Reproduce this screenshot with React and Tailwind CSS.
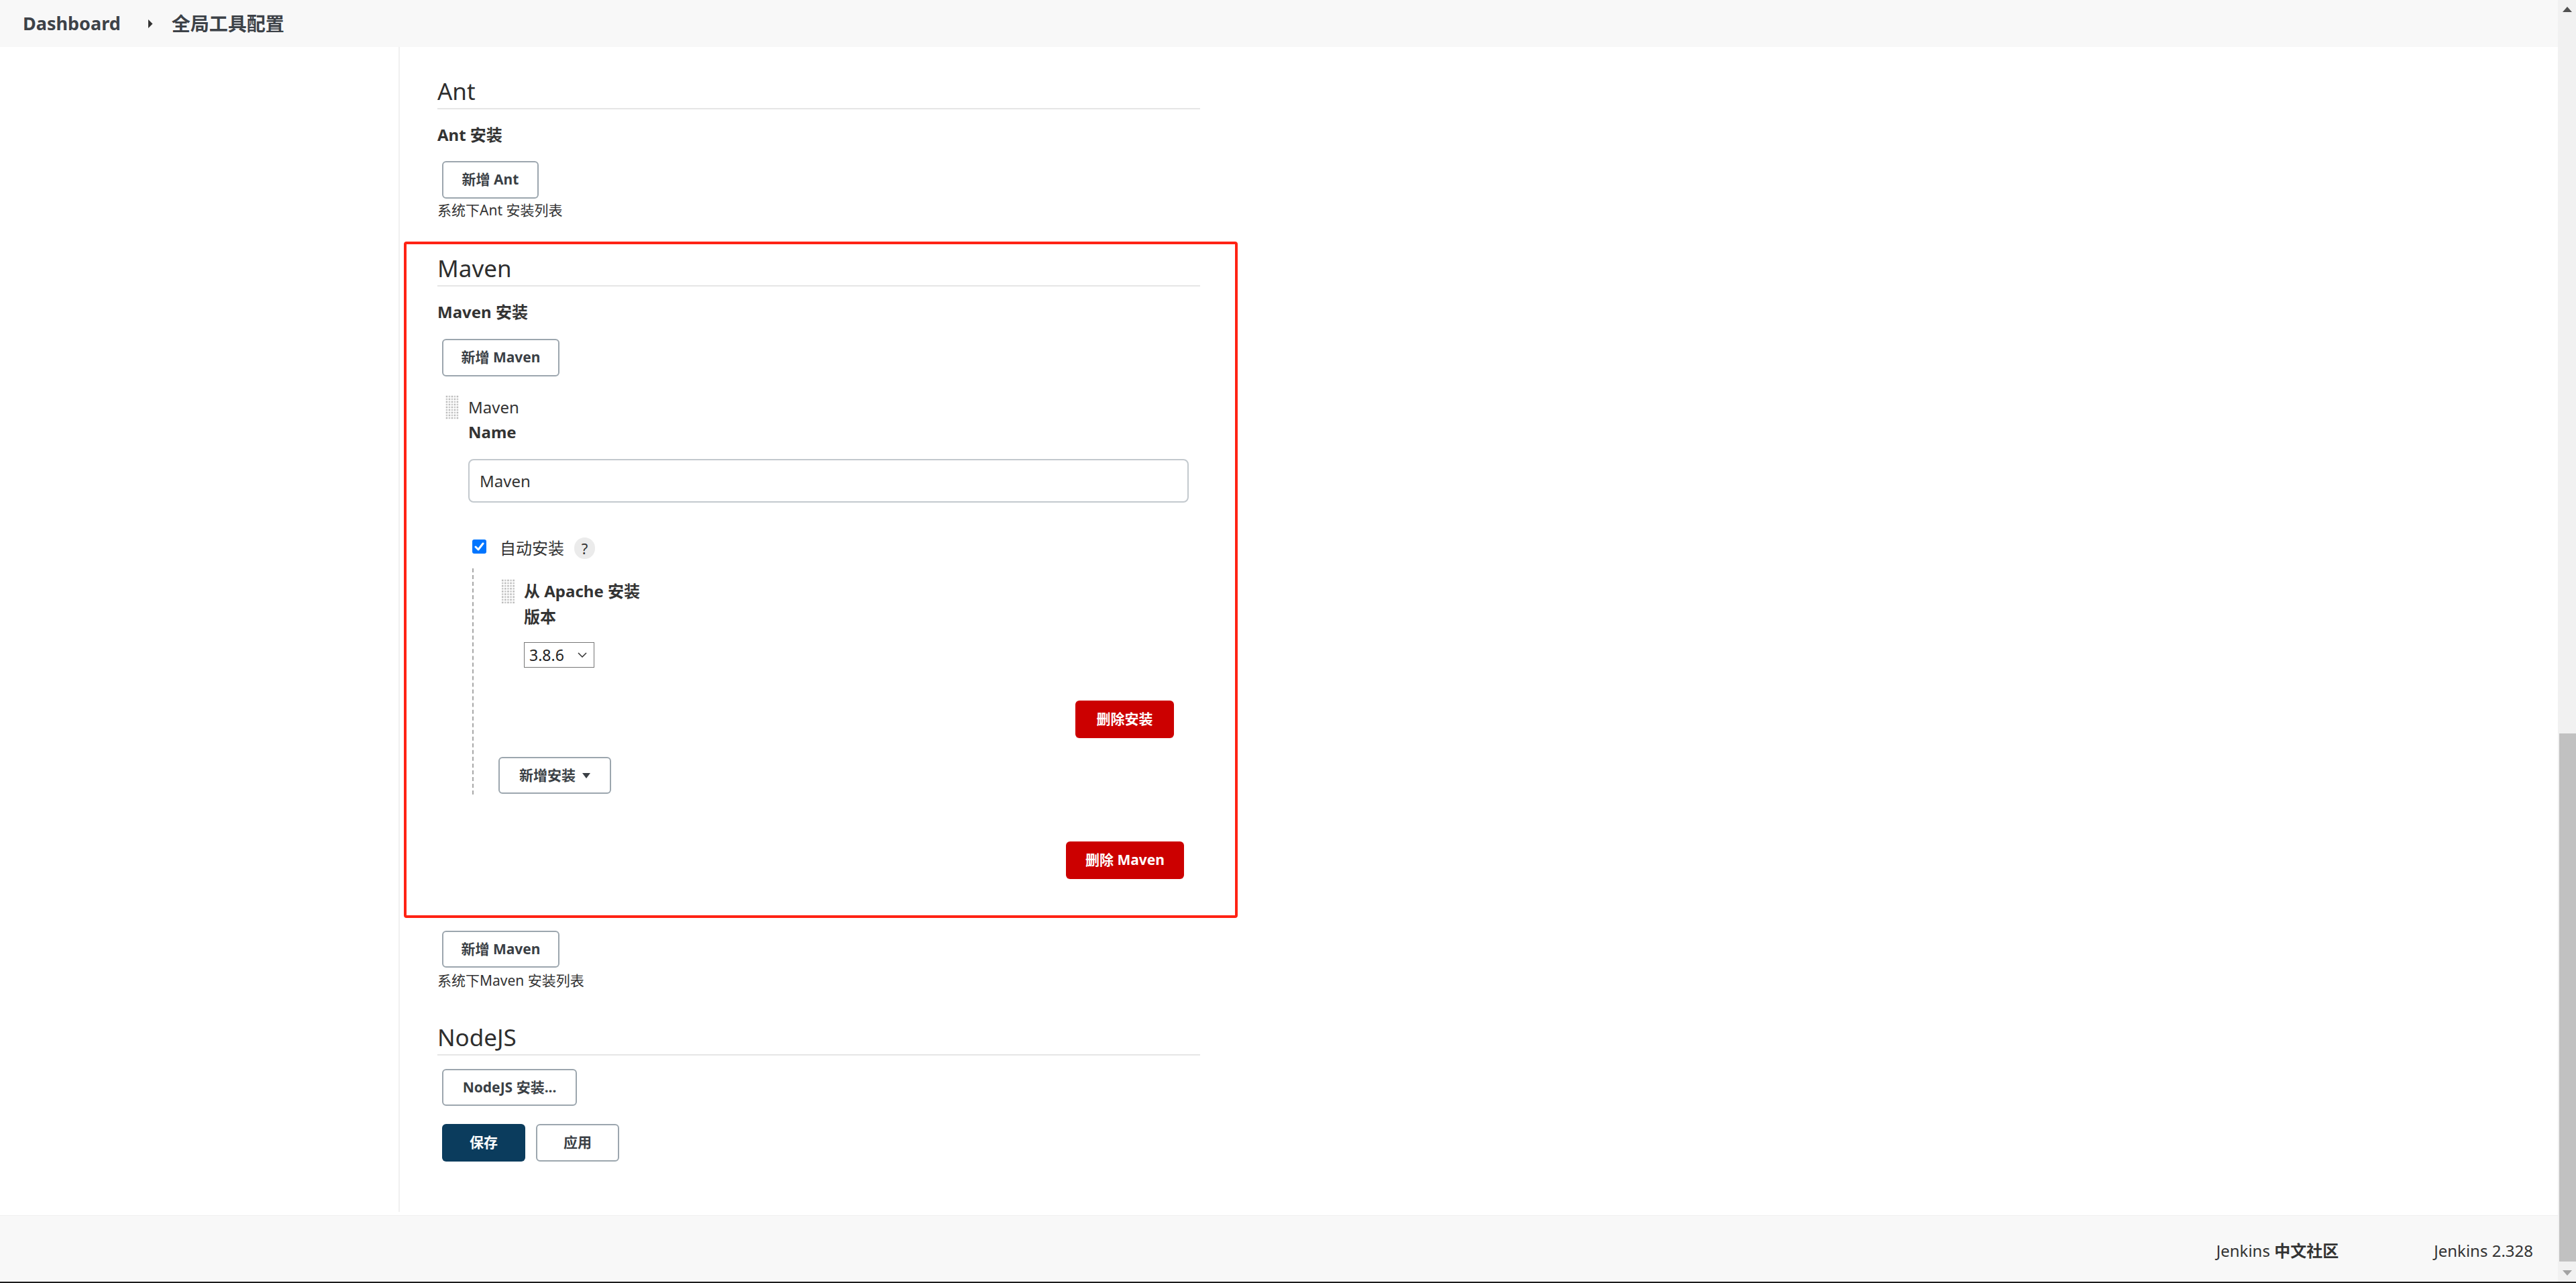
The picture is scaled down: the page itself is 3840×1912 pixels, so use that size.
import React from "react";

const Handle = ({ big }) => {
  const rows = 9;
  const cols = 5;
  const cells = [];
  for (let r = 0; r < rows; r++) {
    for (let c = 0; c < cols; c++) {
      cells.push(
        <rect key={r + "-" + c} x={c * 4 + 0.7} y={r * 4 + 0.7} width="2.5" height="2.5" fill={(r + c) % 2 === 0 ? "#bdbdbd" : "#cbcbcb"} />
      );
    }
  }
  return (
    <svg width={big ? 21 : 20} height={big ? 37 : 36} viewBox="0 0 20 36" className="shrink-0">
      {cells}
    </svg>
  );
};

const Btn = ({ className = "", children }) => (
  <div
    className={
      "flex items-center justify-center rounded-[6px] border-2 border-[#9ca6ae] bg-white text-[21px] font-bold text-[#3a3f45] " +
      className
    }
  >
    {children}
  </div>
);

const DangerBtn = ({ className = "", children }) => (
  <div
    className={
      "flex items-center justify-center rounded-[6px] bg-[#cc0000] text-[21px] font-bold text-white " + className
    }
  >
    {children}
  </div>
);

const Heading = ({ className = "", children }) => (
  <div className={"text-[35px] leading-[48px] pt-[2px] pb-[1px] border-b-2 border-[#e6e6e6] text-[#2e2e2e] " + className}>
    {children}
  </div>
);

export default function App() {
  return (
    <div className="w-[3840px] h-[1912px] flex flex-col overflow-hidden bg-white font-['Noto_Sans','Noto_Sans_CJK_SC',sans-serif] text-[#333]">
      <div className="flex flex-1 min-h-0">
        {/* page */}
        <div className="flex-1 flex flex-col min-w-0">
          {/* header / breadcrumbs */}
          <div className="h-[70px] shrink-0 bg-[#f8f8f8] flex items-center pl-[34px] font-bold text-[#3d4248]">
            <span className="text-[27px]">Dashboard</span>
            <svg width="7" height="13" viewBox="0 0 7 13" className="ml-[41px]">
              <polygon points="0,0 6.5,6.5 0,13" fill="#333" />
            </svg>
            <span className="ml-[28px] text-[28px]">全局工具配置</span>
          </div>

          {/* main */}
          <div className="relative flex-1 flex min-h-0">
            <div className="w-[594px] shrink-0" />
            <div className="w-[1195px] shrink-0 border-l-2 border-[#f0f0f0] pl-[56px] mb-[5px] flex flex-col">
              {/* Ant */}
              <Heading className="mt-[40px]">Ant</Heading>
              <div className="mt-[22px] text-[24px] leading-[32px] font-bold">Ant 安装</div>
              <Btn className="mt-[23px] ml-[7px] w-[144px] h-[56px] self-start">新增 Ant</Btn>
              <div className="mt-[4px] text-[21px] leading-[26px]">系统下Ant 安装列表</div>

              {/* Maven */}
              <Heading className="mt-[48px]">Maven</Heading>
              <div className="mt-[22px] text-[24px] leading-[32px] font-bold">Maven 安装</div>
              <Btn className="mt-[24px] ml-[7px] w-[175px] h-[56px] self-start">新增 Maven</Btn>

              <div className="mt-[28px] ml-[12px] mr-[17px] flex gap-[14px]">
                <Handle />
                <div className="flex-1 flex flex-col">
                  <div className="mt-[2px] text-[24px] leading-[32px]">Maven</div>
                  <div className="mt-[5px] text-[24px] leading-[32px] font-bold">Name</div>
                  <div className="mt-[24px] h-[65px] border-2 border-[#c3c9ce] rounded-[8px] px-[15px] flex items-center text-[24px]">
                    Maven
                  </div>

                  <div className="mt-[52px] h-[32px] flex items-center">
                    <div className="ml-[6px] mb-[5px] w-[21px] h-[21px] rounded-[3px] bg-[#0075ff] flex items-center justify-center">
                      <svg width="15" height="13" viewBox="0 0 15 13">
                        <path d="M2 7 L6 11 L13 2" fill="none" stroke="#fff" strokeWidth="3" strokeLinecap="round" strokeLinejoin="round" />
                      </svg>
                    </div>
                    <span className="ml-[20px] text-[24px] leading-[32px]">自动安装</span>
                    <div className="ml-[15px] w-[31px] h-[32px] rounded-full bg-[#ebebeb] flex items-center justify-center text-[22px] text-[#333]">
                      ?
                    </div>
                  </div>

                  <div className="mt-[14px] ml-[6px] border-l-2 border-dashed border-[#a8a8a8] flex flex-col pt-[16px] pb-[1px]">
                    <div className="ml-[41px] mr-[22px] flex gap-[13px]">
                      <Handle big />
                      <div className="flex-1 flex flex-col">
                        <div className="mt-[2px] text-[24px] leading-[32px] font-bold">从 Apache 安装</div>
                        <div className="mt-[6px] text-[24px] leading-[32px] font-bold">版本</div>
                        <div className="mt-[22px] w-[105px] h-[38px] border border-[#767676] flex items-center pl-[7px] text-[23px] text-[#222]">
                          <span>3.8.6</span>
                          <svg width="14" height="8" viewBox="0 0 14 8" className="ml-auto mr-[10px]">
                            <path d="M1 1 L7 7 L13 1" fill="none" stroke="#333" strokeWidth="1.5" />
                          </svg>
                        </div>
                        <DangerBtn className="mt-[49px] self-end w-[147px] h-[56px]">删除安装</DangerBtn>
                      </div>
                    </div>
                    <Btn className="mt-[28px] ml-[37px] w-[168px] h-[55px] self-start gap-[10px]">
                      <span>新增安装</span>
                      <svg width="12" height="8" viewBox="0 0 12 8">
                        <polygon points="0,0 12,0 6,8" fill="#3a3f45" />
                      </svg>
                    </Btn>
                  </div>

                  <DangerBtn className="mt-[70px] mr-[7px] self-end w-[176px] h-[56px]">删除 Maven</DangerBtn>
                </div>
              </div>

              <Btn className="mt-[77px] ml-[7px] w-[175px] h-[55px] self-start">新增 Maven</Btn>
              <div className="mt-[6px] text-[21px] leading-[26px]">系统下Maven 安装列表</div>

              {/* NodeJS */}
              <Heading className="mt-[46px]">NodeJS</Heading>
              <Btn className="mt-[20px] ml-[7px] w-[201px] h-[55px] self-start">NodeJS 安装...</Btn>

              <div className="mt-[27px] ml-[7px] flex gap-[16px]">
                <div className="w-[124px] h-[56px] rounded-[6px] bg-[#0b3c5d] text-white text-[21px] font-bold flex items-center justify-center">
                  保存
                </div>
                <Btn className="w-[124px] h-[56px]">应用</Btn>
              </div>
            </div>

            {/* annotation box */}
            <div className="absolute left-[602px] top-[290px] w-[1243px] h-[1008px] border-4 border-[#ff2314] rounded-[4px] pointer-events-none" />
          </div>

          {/* footer */}
          <div className="h-[99px] shrink-0 bg-[#f8f8f8] border-t border-[#efefef] flex items-center justify-end pr-[37px] pt-[6px] text-[24px] text-[#333]">
            <span className="mr-[142px]">
              Jenkins <span className="font-bold">中文社区</span>
            </span>
            <span>Jenkins 2.328</span>
          </div>
        </div>

        {/* scrollbar */}
        <div className="w-[27px] shrink-0 bg-[#f1f1f1] flex flex-col">
          <div className="h-[27px] flex items-center justify-center">
            <svg width="14" height="8" viewBox="0 0 14 8">
              <polygon points="0,8 14,8 7,0" fill="#505050" />
            </svg>
          </div>
          <div className="flex-1 flex flex-col justify-end pl-[2px] pb-[3px]">
            <div className="h-[787px] bg-[#c1c1c1]" />
          </div>
          <div className="h-[27px] flex items-center justify-center">
            <svg width="14" height="8" viewBox="0 0 14 8">
              <polygon points="0,0 14,0 7,8" fill="#a3a3a3" />
            </svg>
          </div>
        </div>
      </div>
      <div className="h-[2px] shrink-0 bg-[#1c1c1c]" />
    </div>
  );
}
